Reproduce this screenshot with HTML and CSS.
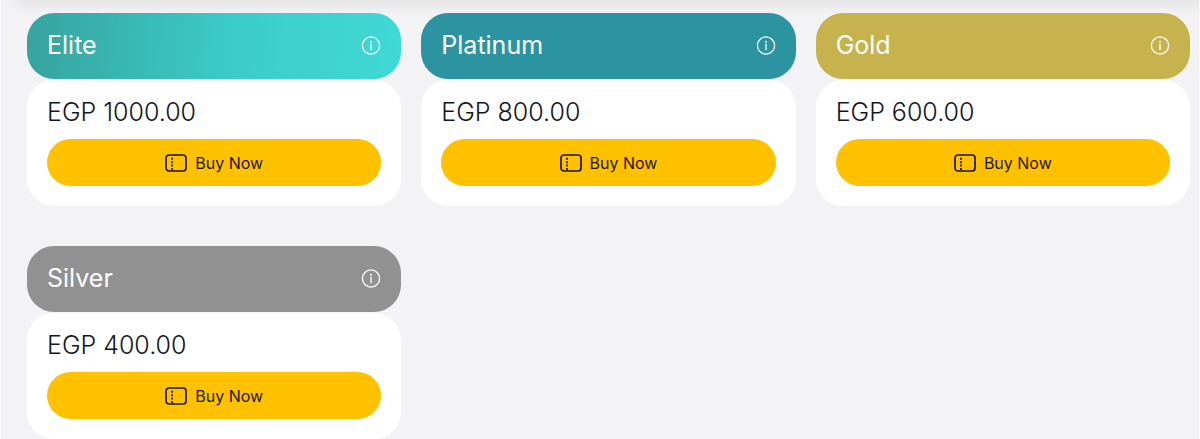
FILE: index.html
```html
<!DOCTYPE html>
<html lang="en">
<head>
<meta charset="utf-8">
<meta name="viewport" content="width=device-width, initial-scale=1">
<title>Ticket categories</title>
<link rel="stylesheet" href="styles.css">
</head>
<body>
<svg class="sprite" aria-hidden="true">
  <symbol id="info" viewBox="0 0 20 20">
    <circle cx="10" cy="10.5" r="8.6" fill="none" stroke="currentColor" stroke-width="1.3"/>
    <circle cx="10" cy="6.7" r="1" fill="currentColor"/>
    <path d="M10 9.1v5.6" fill="none" stroke="currentColor" stroke-width="1.3" stroke-linecap="round"/>
  </symbol>
  <symbol id="ticket" viewBox="0 0 22 18">
    <rect x="1" y="1" width="20" height="16" rx="3" fill="none" stroke="currentColor" stroke-width="1.7"/>
    <path d="M7 3.8v2M7 7.2v2M7 10.6v2M7 14v2" fill="none" stroke="currentColor" stroke-width="1.7"/>
  </symbol>
</svg>
<main class="tickets">
  <article class="card">
    <header class="card-head elite">
      <h2 class="card-title">Elite</h2>
      <button class="info" type="button" aria-label="About Elite"><svg class="info-icon"><use href="#info"/></svg></button>
    </header>
    <div class="card-body">
      <p class="price">EGP 1000.00</p>
      <button class="buy" type="button"><svg class="ticket-icon" aria-hidden="true"><use href="#ticket"/></svg>Buy Now</button>
    </div>
  </article>
  <article class="card">
    <header class="card-head platinum">
      <h2 class="card-title">Platinum</h2>
      <button class="info" type="button" aria-label="About Platinum"><svg class="info-icon"><use href="#info"/></svg></button>
    </header>
    <div class="card-body">
      <p class="price">EGP 800.00</p>
      <button class="buy" type="button"><svg class="ticket-icon" aria-hidden="true"><use href="#ticket"/></svg>Buy Now</button>
    </div>
  </article>
  <article class="card">
    <header class="card-head gold">
      <h2 class="card-title">Gold</h2>
      <button class="info" type="button" aria-label="About Gold"><svg class="info-icon"><use href="#info"/></svg></button>
    </header>
    <div class="card-body">
      <p class="price">EGP 600.00</p>
      <button class="buy" type="button"><svg class="ticket-icon" aria-hidden="true"><use href="#ticket"/></svg>Buy Now</button>
    </div>
  </article>
  <article class="card">
    <header class="card-head silver">
      <h2 class="card-title">Silver</h2>
      <button class="info" type="button" aria-label="About Silver"><svg class="info-icon"><use href="#info"/></svg></button>
    </header>
    <div class="card-body">
      <p class="price">EGP 400.00</p>
      <button class="buy" type="button"><svg class="ticket-icon" aria-hidden="true"><use href="#ticket"/></svg>Buy Now</button>
    </div>
  </article>
</main>
</body>
</html>
```
FILE: styles.css
```css
* {
  box-sizing: border-box;
}

body {
  margin: 0;
  background:
    linear-gradient(90deg, #f3f3f5 4px, transparent 26px),
    linear-gradient(#e6e6e7, #f3f3f5 14px) no-repeat #f3f3f5;
  color: #14161f;
  font-family: Inter, "Liberation Sans", sans-serif;
}

.sprite {
  display: none;
}

.tickets {
  display: grid;
  grid-template-columns: repeat(auto-fill, minmax(320px, 1fr));
  gap: 40px 20px;
  padding: 13px 9px 0 26px;
  border: solid #f9f9fa;
  border-width: 0 1px;
}

.card {
  display: grid;
  gap: 1px;
}

.card-head {
  display: flex;
  align-items: center;
  justify-content: space-between;
  padding: 16px 20px 18px;
  border-radius: 27px;
  color: #fff;
}

.elite {
  background: linear-gradient(95deg, #36a39f, #3cccc8 55%, #40d9d5);
}

.platinum {
  background: #2c93a0;
}

.gold {
  background: #c7b34e;
}

.silver {
  background: #919191;
}

.card-title {
  margin: 0;
  font-size: 25px;
  font-weight: 400;
  line-height: 32px;
}

.info {
  display: flex;
  padding: 0;
  border: 0;
  background: none;
  color: inherit;
  cursor: pointer;
}

.info-icon {
  width: 20px;
  height: 20px;
}

.card-body {
  padding: 16px 20px 20px;
  border-radius: 27px;
  background: #fff;
}

.price {
  margin: 0 0 11px;
  font-size: 25px;
  font-weight: 300;
  line-height: 32px;
}

.buy {
  display: flex;
  align-items: center;
  justify-content: center;
  gap: 8px;
  width: 100%;
  height: 47px;
  border: 0;
  border-radius: 24px;
  background: #ffc100;
  color: #1c1606;
  font-family: inherit;
  font-size: 16px;
  font-weight: 400;
  cursor: pointer;
}

.ticket-icon {
  width: 22px;
  height: 18px;
}
```
